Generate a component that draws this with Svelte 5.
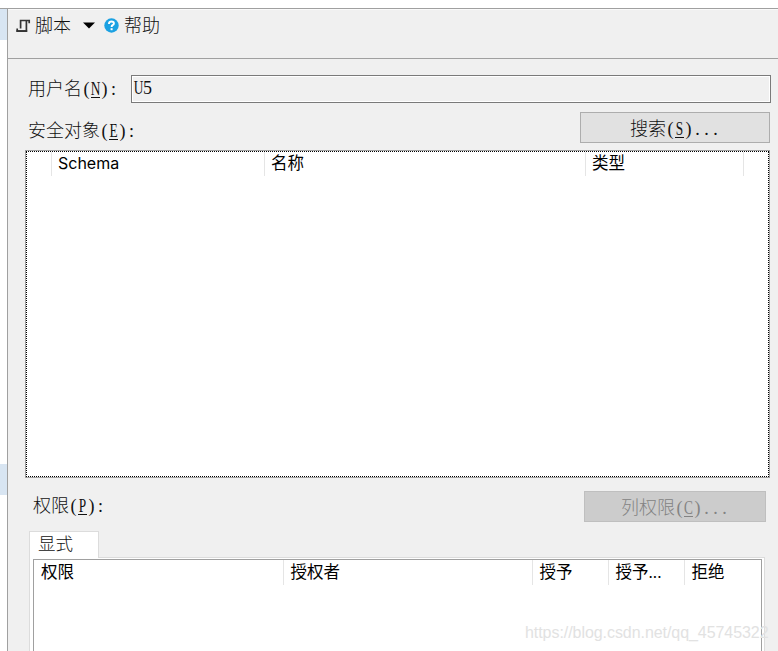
<script lang="ts">
    type Column = { title: string; width: number; latin?: boolean; dots?: boolean };

    let userName = "U5";

    const securables: Column[] = [
        { title: "", width: 25 },
        { title: "Schema", width: 213, latin: true },
        { title: "名称", width: 321 },
        { title: "类型", width: 158 },
    ];

    const permissions: Column[] = [
        { title: "权限", width: 250 },
        { title: "授权者", width: 249 },
        { title: "授予", width: 76 },
        { title: "授予", width: 76, dots: true },
        { title: "拒绝", width: 76 },
    ];
</script>

<!-- latin characters sit in half-width cells -->
{#snippet cells(text: string)}{#each text as ch}<span class="cell" class:letter={/\w/.test(ch)}><span class="glyph">{ch}</span></span>{/each}{/snippet}

{#snippet caption(text: string, key: string, tail: string)}
    {text}{@render cells("(")}<span class="key">{@render cells(key)}</span>{@render cells(")" + tail)}
{/snippet}

<div class="window">
    <div class="gutter">
        <div class="mark first"></div>
        <div class="mark second"></div>
    </div>

    <div class="dialog">
        <div class="toolbar">
            <svg class="script-icon" width="15" height="14" viewBox="0 0 15 14">
                <path d="M4.6 9.5V1.5H13.2V4.2M10.4 1.5V12H1.2V9.6" fill="none" stroke="#333" stroke-width="1.7" />
                <path d="M0.4 11.2H11.2V13H0.4Z" fill="#333" />
            </svg>
            <span class="tool">脚本</span>
            <svg class="arrow" width="12" height="7" viewBox="0 0 12 7">
                <path d="M0 0.5H12L6 6.5Z" fill="#000" />
            </svg>
            <svg class="help-icon" width="15" height="15" viewBox="0 0 15 15">
                <circle cx="7.5" cy="7.5" r="7.2" fill="#1ba1e2" />
                <path d="M5 6V5.3Q5.2 3.5 7.5 3.5Q9.9 3.5 9.9 5.4Q9.9 6.4 8.6 7.1Q7.6 7.7 7.6 9" fill="none" stroke="#fff" stroke-width="1.9" />
                <rect x="6.6" y="10.2" width="2" height="2" fill="#fff" />
            </svg>
            <span class="tool">帮助</span>
        </div>

        <div class="content">
            <div class="user-row">
                <div class="label">{@render caption("用户名", "N", ":")}</div>
                <div class="input">{@render cells(userName)}</div>
            </div>

            <div class="object-row">
                <div class="label">{@render caption("安全对象", "E", ":")}</div>
                <div class="button search">{@render caption("搜索", "S", "...")}</div>
            </div>

            <div class="list">
                <div class="focus">
                    {#each securables as col}
                        <div class="column" class:latin={col.latin} style:width={col.width + "px"}>{col.title}</div>
                    {/each}
                </div>
            </div>

            <div class="permission-row">
                <div class="label">{@render caption("权限", "P", ":")}</div>
                <div class="button disabled">{@render caption("列权限", "C", "...")}</div>
            </div>

            <div class="tab">显式</div>
            <div class="tab-page">
                <div class="grid">
                    {#each permissions as col}
                        <div class="column" style:width={col.width + "px"}>{col.title}{#if col.dots}<span class="dots">...</span>{/if}</div>
                    {/each}
                </div>
            </div>
        </div>
    </div>

    <div class="watermark">https://blog.csdn.net/qq_45745322</div>
</div>

<style>
    :global(body) {
        background: #fff;
    }

    .window {
        position: relative;
        display: flex;
        width: 778px;
        height: 651px;
        padding-top: 8px;
        box-sizing: border-box;
        overflow: hidden;
        font-family: "Noto Sans CJK SC", sans-serif;
        font-size: 18px;
        font-weight: 300;
        line-height: 24px;
        color: #111;
        white-space: nowrap;
    }

    .gutter {
        width: 7px;
        border-top: 1px solid #a0a0a0;
    }
    .mark {
        height: 31px;
        background: #d8e5f2;
    }
    .mark.second {
        margin-top: 424px;
    }

    .dialog {
        flex: 1;
        border-top: 1px solid #a0a0a0;
        border-left: 1px solid #a0a0a0;
        background: #f0f0f0;
    }

    .toolbar {
        display: flex;
        align-items: center;
        height: 50px;
        padding: 0 0 16px 8px;
        box-sizing: border-box;
        border-bottom: 1px solid #a0a0a0;
        box-shadow: inset 0 1px #fafafa;
    }
    .script-icon {
        margin-right: 4px;
    }
    .arrow {
        margin: 0 9px 0 12px;
    }
    .help-icon {
        margin-right: 5px;
    }
    .tool {
        width: 36px;
        padding-bottom: 3px;
    }

    .content {
        padding: 16px 0 0 17px;
    }

    .cell {
        display: inline-block;
        width: 9px;
        font-family: "Liberation Serif", serif;
        font-weight: 400;
        line-height: 18px;
    }
    .glyph {
        display: flex;
        justify-content: center;
    }
    .letter .glyph {
        transform: scaleX(0.74);
    }
    .key {
        display: inline-block;
        height: 17px;
        border-bottom: 1px solid currentColor;
        font-family: "Liberation Serif", serif;
        line-height: 18px;
    }

    .user-row {
        display: flex;
        height: 37px;
    }
    .user-row .label {
        width: 103px;
        padding-left: 3px;
        box-sizing: border-box;
    }
    .input {
        width: 640px;
        height: 28px;
        margin-left: 3px;
        padding-left: 2px;
        box-sizing: border-box;
        border: 1px solid #7a7a7a;
        box-shadow: inset 0 0 0 1px #fff;
        line-height: 21px;
    }
    .input .letter:last-child .glyph {
        transform: none;
    }

    .object-row {
        display: flex;
        justify-content: space-between;
        width: 745px;
        height: 38px;
    }
    .object-row .label {
        padding: 5px 0 0 3px;
    }

    .button {
        height: 31px;
        box-sizing: border-box;
        border: 1px solid #adadad;
        background: #e1e1e1;
        line-height: 28px;
        text-align: center;
    }
    .search {
        width: 190px;
    }
    .disabled {
        width: 182px;
        border-color: #bfbfbf;
        background: #ccc;
        color: #838383;
    }

    .list {
        width: 745px;
        height: 328px;
        box-sizing: border-box;
        border: 1px solid #a0a0a0;
        background: #fff;
    }
    .focus {
        display: flex;
        height: 326px;
        box-sizing: border-box;
        border: 1px dotted #000;
    }
    .column {
        flex-shrink: 0;
        height: 25px;
        padding-left: 7px;
        box-sizing: border-box;
        border-right: 1px solid #e5e5e5;
        font-size: 16.5px;
        font-weight: 400;
        line-height: 22px;
        color: #000;
    }
    .focus .column {
        height: 24px;
        padding-left: 6px;
        line-height: 20px;
    }
    .focus .column.latin {
        font-family: Inter, sans-serif;
        font-size: 16px;
        line-height: 22px;
    }

    .permission-row {
        display: flex;
        justify-content: space-between;
        width: 741px;
        height: 53px;
        padding-top: 13px;
        box-sizing: border-box;
    }
    .permission-row .label {
        padding: 1px 0 0 8px;
    }

    .tab {
        position: relative;
        width: 70px;
        height: 27px;
        margin: 0 0 -1px 4px;
        padding-left: 8px;
        box-sizing: border-box;
        border: 1px solid #dcdcdc;
        border-bottom: none;
        background: #fff;
        font-size: 17.5px;
        line-height: 22px;
    }
    .tab-page {
        width: 736px;
        height: 100px;
        margin-left: 4px;
        padding: 1px 2px 0 3px;
        box-sizing: border-box;
        border: 1px solid #dcdcdc;
        background: #fff;
    }
    .grid {
        display: flex;
        height: 98px;
        box-sizing: border-box;
        border: 1px solid #a0a0a0;
    }
    .grid .column {
        padding-left: 6.5px;
    }
    .grid .column:first-child {
        padding-left: 7px;
    }
    .grid .column:last-child {
        border-right: none;
    }
    .dots {
        font-family: Inter, sans-serif;
        font-size: 15px;
    }

    .watermark {
        position: absolute;
        left: 525px;
        top: 621px;
        font-family: "Liberation Sans", sans-serif;
        font-size: 16px;
        font-weight: 400;
        letter-spacing: -0.06px;
        color: #e2e2e2;
    }
</style>
